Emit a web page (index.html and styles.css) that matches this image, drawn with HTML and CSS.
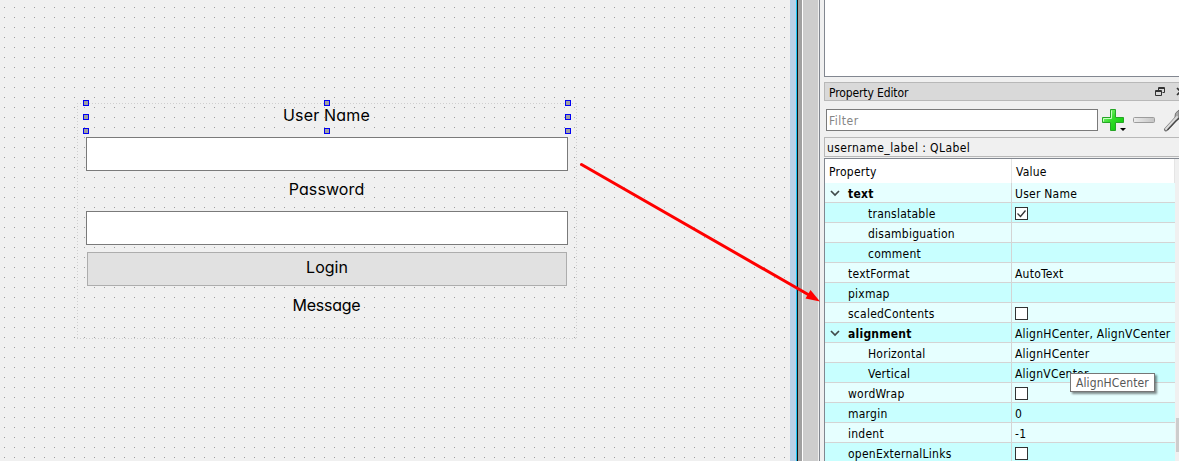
FILE: index.html
```html
<!DOCTYPE html>
<html lang="en">
<head>
<meta charset="utf-8">
<title>Form Designer</title>
<link rel="stylesheet" href="styles.css">
</head>
<body>
<div class="window">
  <main class="canvas">
    <form class="form">
      <svg class="outline" width="500" height="236"><path d="M0 .5H500M0 235.5H500M.5 0V236M499.5 0V236" fill="none" stroke="#cfcfcf" stroke-dasharray="1 2"/></svg>
      <div class="label selected"><span class="t-user">User Name</span>
        <i class="handle l t"></i><i class="handle c t"></i><i class="handle r t"></i>
        <i class="handle l m"></i><i class="handle r m"></i>
        <i class="handle l b"></i><i class="handle c b"></i><i class="handle r b"></i>
      </div>
      <div class="field"></div>
      <div class="label password"><span class="t-pass">Password</span></div>
      <div class="field"></div>
      <div class="button"><span class="t-login">Login</span></div>
      <div class="label message"><span class="t-msg">Message</span></div>
    </form>
  </main>
  <div class="frame-blue"></div><div class="frame-cyan"></div><div class="frame-black"></div>
  <div class="frame-gray"></div><div class="frame-white"></div><div class="frame-silver"></div><div class="frame-edge"></div>
  <aside class="dock">
    <div class="inspector"></div>
    <div class="title"><span class="title-text">Property Editor</span>
      <svg class="title-icons" width="24" height="17"><path d="M3.500 5V1.500H9.500V6.500H7.500M3.500 2.500H9.500M.5 4.500H6.500V9.500H.5ZM.5 5.500H6.500" transform="translate(0 3)" fill="none" stroke="#333"/><path d="M22 5l7 7M29 5l-7 7" stroke="#333" stroke-width="1.600"/></svg>
    </div>
    <div class="toolbar">
      <div class="filter"><span>Filter</span></div>
      <svg class="tools" width="79" height="34" viewBox="0 0 79 34">
        <defs>
          <linearGradient id="green" x1="0" y1="0" x2="1" y2="1"><stop offset="0" stop-color="#aaff9c"/><stop offset=".45" stop-color="#35dd2b"/><stop offset="1" stop-color="#00c800"/></linearGradient>
          <linearGradient id="silver" x1="0" y1="0" x2="1" y2="0"><stop offset="0" stop-color="#ececec"/><stop offset="1" stop-color="#c4c4c4"/></linearGradient>
        </defs>
        <g transform="translate(0 2)">
        <path d="M10.500 6.500h5v8h8v5h-8v8h-5v-8h-8v-5h8z" fill="url(#green)" stroke="#26a526"/>
        <path d="M11.500 7.500v8h-8v3" stroke="#c6ffc0" fill="none"/>
        <path d="M20 25h6l-3 3z" fill="#000"/>
        <rect x="33.500" y="14.500" width="21" height="5" rx="1" fill="url(#silver)" stroke="#9c9c9c"/>
        <path d="M66 26.500L76.500 15" stroke="#777" stroke-width="4" stroke-linecap="round"/>
        <path d="M75 14q-1-4 4-7v9l-3 2z" fill="#aaa" stroke="#777"/>
        <path d="M66 26L77 14" stroke="#dcdcdc" stroke-width="2" stroke-linecap="round"/>
        <path d="M67.500 27L79 15" stroke="#444" stroke-width="1.200"/>
        </g>
      </svg>
    </div>
    <div class="object"><span>username_label : QLabel</span></div>
    <div class="tree">
      <div class="rows">
        <div class="row head"><span>Property</span><span>Value</span></div>
        <div class="row group"><span><svg class="chev" width="10" height="7"><path d="M1 1l4 4 4-4"/></svg><b class="b-text">text</b></span><span>User Name</span></div>
        <div class="row sub alt"><span>translatable</span><span><i class="check"><svg width="11" height="11"><path d="M1.500 5.500l3 3L9.500 2.500" fill="none" stroke="#333" stroke-width="1.300"/></svg></i></span></div>
        <div class="row sub"><span>disambiguation</span><span></span></div>
        <div class="row sub alt"><span>comment</span><span></span></div>
        <div class="row"><span>textFormat</span><span>AutoText</span></div>
        <div class="row alt"><span>pixmap</span><span></span></div>
        <div class="row"><span>scaledContents</span><span><i class="check"></i></span></div>
        <div class="row group alt"><span><svg class="chev" width="10" height="7"><path d="M1 1l4 4 4-4"/></svg><b>alignment</b></span><span>AlignHCenter, AlignVCenter</span></div>
        <div class="row sub"><span>Horizontal</span><span>AlignHCenter</span></div>
        <div class="row sub alt"><span>Vertical</span><span>AlignVCenter</span></div>
        <div class="row"><span>wordWrap</span><span><i class="check"></i></span></div>
        <div class="row alt"><span>margin</span><span>0</span></div>
        <div class="row"><span>indent</span><span>-1</span></div>
        <div class="row alt"><span>openExternalLinks</span><span><i class="check"></i></span></div>
      </div>
      <div class="scroll"><div class="thumb"></div></div>
    </div>
  </aside>
  <div class="tooltip">AlignHCenter</div>
  <svg class="arrow" width="1179" height="461"><path d="M581.500 164.500L809 295" stroke="#f00" stroke-width="3" stroke-linecap="round"/><path d="M820 301.500L805.500 298.500L810.500 290Z" fill="#f00"/></svg>
</div>
</body>
</html>
```
FILE: styles.css
```css
* { box-sizing: border-box; }
body { margin: 0; width: 1179px; height: 461px; overflow: hidden; background: #f0f0f0; color: #000; font: 12px/19px "DejaVu Sans Condensed", "DejaVu Sans", sans-serif; letter-spacing: .24px; }
.window { position: relative; display: flex; width: 1179px; height: 461px; overflow: hidden; }
.canvas { position: relative; flex: 0 0 790px; background: linear-gradient(transparent 1px, #f0f0f0 1px) 0 7px / 10px 10px, linear-gradient(90deg, #9c9c9c 1px, #f0f0f0 1px) 4px 0 / 10px 10px; }
.form { position: absolute; left: 77px; top: 103px; width: 500px; height: 236px; padding: 0 9px; display: flex; flex-direction: column; font-family: Inter, sans-serif; font-size: 16px; font-feature-settings: "cv11"; letter-spacing: 0; }
.outline { position: absolute; left: 0; top: 0; }
.label { display: flex; justify-content: center; align-items: center; height: 28px; margin-bottom: 6px; padding-bottom: 3px; line-height: 24px; }
.label span { padding-right: 1px; }
.selected { position: relative; padding-bottom: 4px; }
.password { padding-bottom: 4px; }
.t-user { letter-spacing: .2px; }
.t-pass { letter-spacing: .1px; }
.t-msg { letter-spacing: -.25px; }
.field { height: 34px; margin-bottom: 6px; background: #fff; border: 1px solid #7a7a7a; }
.button { height: 34px; margin: 1px 1px 6px; display: flex; justify-content: center; align-items: center; background: #e1e1e1; border: 1px solid #adadad; padding-bottom: 3px; }
.handle { position: absolute; width: 6px; height: 6px; background: #a0a0a0; border: 1px solid #0000f5; }
.handle.l { left: -3px; } .handle.c { left: 238px; } .handle.r { left: 479px; }
.handle.t { top: -3px; } .handle.m { top: 11px; } .handle.b { top: 25px; }
.frame-blue { width: 6px; background: #b8d0e8; }
.frame-cyan { width: 1px; background: #16c4f4; }
.frame-black { width: 1px; background: #111; }
.frame-gray { width: 4px; background: #a0a0a0; }
.frame-white { width: 1px; background: #fff; }
.frame-silver { width: 15px; background: #cdcdcd; }
.frame-edge { width: 2px; background: #f0f0f0; border-right: 1px solid #828790; }
.dock { flex: 1; padding-left: 4px; display: flex; flex-direction: column; min-width: 0; }
.inspector { height: 77px; background: #fff; border: solid #828790; border-width: 0 0 1px 1px; margin-bottom: 5px; flex: none; }
.title { height: 19px; flex: none; display: flex; justify-content: space-between; background: #d9d9d9; border: 1px solid #b8b8b8; border-right: 0; padding-left: 4px; line-height: 20px; letter-spacing: -.12px; }
.toolbar { height: 36px; flex: none; display: flex; padding-left: 2px; }
.filter { width: 272px; height: 22px; margin-top: 8px; background: #fff; border: 1px solid #7a7a7a; padding-left: 2px; line-height: 22px; color: #858585; letter-spacing: .5px; }
.tools { margin-left: 2px; }
.object { height: 20px; flex: none; border: 1px solid #b8b8b8; border-right: 0; padding-left: 2px; line-height: 20px; margin-bottom: 1px; letter-spacing: .42px; }
.tree { height: 303px; flex: none; display: flex; border: solid #828790; border-width: 1px 0 0 1px; }
.rows { width: 350px; flex: none; }
.row { display: grid; grid-template-columns: 187px 163px; height: 20px; background: #e6ffff; border-bottom: 1px solid #d4d4d4; white-space: nowrap; line-height: 20px; }
.row > span { display: flex; align-items: center; padding-left: 23px; padding-top: 2px; height: 19px; }
.row > span:first-child { border-right: 1px solid #d4d4d4; }
.row > span:last-child { padding-left: 3px; }
.row.alt { background: #c8ffff; }
.row.sub > span:first-child { padding-left: 43px; }
.row.group > span:first-child { padding-left: 5px; }
.row.head { height: 24px; background: #fff; border-bottom: 0; border-right: 1px solid #e5e5e5; }
.row.head > span { height: 24px; padding-top: 1px; }
.row.head > span:first-child { padding-left: 4px; border-right-color: #e5e5e5; }
.row.head > span:last-child { padding-left: 4px; }
.chev { margin: 0 8px 0 0; fill: none; stroke: #404b4b; stroke-width: 1.7; }
.check { width: 13px; height: 13px; background: #fff; border: 1px solid #333; display: flex; }
.scroll { flex: 1; background: #f0f0f0; }
.thumb { width: 3px; height: 34px; margin: 259px 0 0 1px; background: #cdcdcd; }
.tooltip { position: absolute; left: 1070px; top: 373px; width: 85px; height: 19px; background: #fff; border: 1px solid #767676; color: #575757; padding-left: 5px; line-height: 18px; letter-spacing: .1px; box-shadow: 2px 2px 2px rgba(0,0,0,.45); }
.arrow { position: absolute; left: 0; top: 0; pointer-events: none; }
```
